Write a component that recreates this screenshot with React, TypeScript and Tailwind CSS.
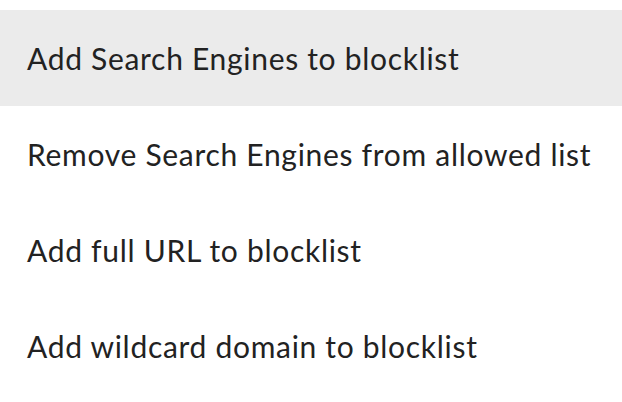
const items = [
  'Add Search Engines to blocklist',
  'Remove Search Engines from allowed list',
  'Add full URL to blocklist',
  'Add wildcard domain to blocklist',
]

export default function App() {
  return (
    <div className="w-[622px] h-[402px] bg-white pt-[10px] font-['Lato',sans-serif]">
      <ul>
        {items.map((label, i) => (
          <li
            key={label}
            className={
              'h-[96px] flex items-center pl-[27px] text-[30px] tracking-[0.7px] text-[#222222] ' +
              (i === 0 ? 'bg-[#ebebeb]' : '')
            }
          >
            {label}
          </li>
        ))}
      </ul>
    </div>
  )
}
